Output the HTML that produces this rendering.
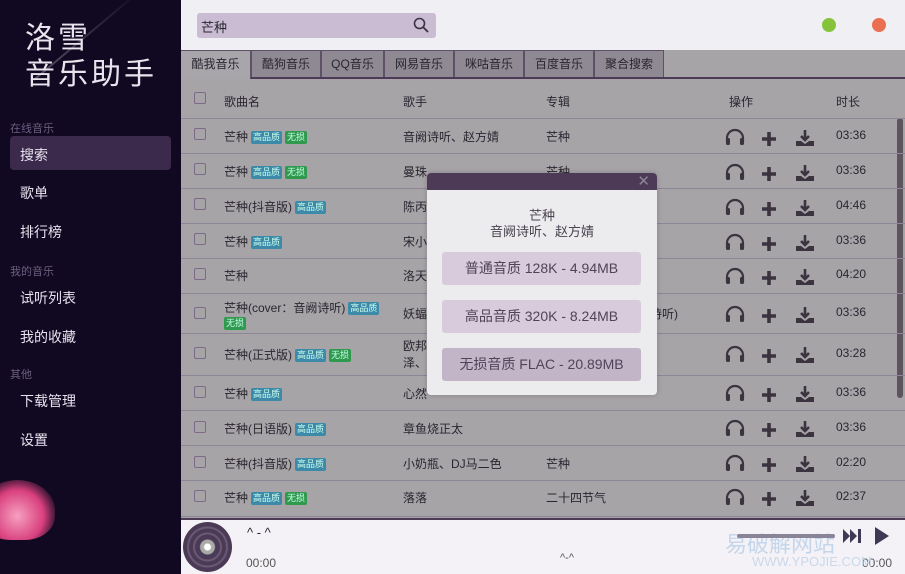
<!DOCTYPE html>
<html><head><meta charset="utf-8"><style>
*{margin:0;padding:0;box-sizing:border-box}
body{width:905px;height:574px;overflow:hidden;position:relative;font-family:"Liberation Sans","Noto Sans CJK SC",sans-serif;background:#a7a4a8}
.a{position:absolute;white-space:nowrap}
#side{left:0;top:0;width:181px;height:574px;background:#100921;overflow:hidden}
.logo{color:#e8e4ee;font-size:30px;letter-spacing:3px;line-height:38px}
.sec{color:#6e5e80;font-size:11px}
.nav{color:#e6e2ee;font-size:14px;left:20px}
#top{left:181px;top:0;width:724px;height:50px;background:#f0eff3}
.tab{top:50px;height:28px;font-size:12px;color:#2a2530;text-align:center;line-height:27px;background:#8f8994;border:1px solid #5e5066;border-bottom:none}
.line{left:181px;width:724px;height:1px;background:#8e8598}
.cb{width:12px;height:12px;border:1px solid #7d6a88;border-radius:2px;left:194px}
.t{font-size:12px;color:#2a2530}
.b{display:inline-block;font-size:9px;color:#cfe;padding:1px 2px;border-radius:2px;margin-left:3px;vertical-align:1px;line-height:11px}
.h{background:#3d8aa8}.w{background:#2f9a4e}
.btn{left:442px;width:199px;height:33px;border-radius:3px;background:#d8ccdc;font-size:14px;color:#514358;text-align:center;line-height:33px}
.tm{left:836px}
</style></head><body>
<div id="side" class="a">
<div class="a" style="width:2px;height:140px;background:linear-gradient(#100921,#8a8090);transform:rotate(50deg);transform-origin:top;left:140px;top:-10px;opacity:.6"></div>
<div class="a logo" style="left:25px;top:20px">洛雪</div>
<div class="a logo" style="left:25px;top:56px">音乐助手</div>
<div class="a sec" style="left:10px;top:120px">在线音乐</div>
<div class="a" style="left:10px;top:136px;width:161px;height:34px;background:#3b2a4c;border-radius:4px"></div>
<div class="a nav" style="top:145px">搜索</div>
<div class="a nav" style="top:183px">歌单</div>
<div class="a nav" style="top:222px">排行榜</div>
<div class="a sec" style="left:10px;top:263px">我的音乐</div>
<div class="a nav" style="top:288px">试听列表</div>
<div class="a nav" style="top:327px">我的收藏</div>
<div class="a sec" style="left:10px;top:366px">其他</div>
<div class="a nav" style="top:391px">下载管理</div>
<div class="a nav" style="top:430px">设置</div>
<div class="a" style="left:-20px;top:480px;width:75px;height:60px;border-radius:50% 50% 40% 40%;background:radial-gradient(circle at 50% 60%,#f6a0c0,#d9407e 50%,#100921 80%)"></div>
</div>
<div id="top" class="a">
<div class="a" style="left:16px;top:13px;width:239px;height:25px;background:#c9bcd3;border-radius:3px"></div>
<div class="a t" style="left:20px;top:17px;font-size:13px">芒种</div>
<svg class="a" style="left:232px;top:17px" width="16" height="16" viewBox="0 0 16 16"><circle cx="6.5" cy="6.5" r="5" fill="none" stroke="#3a3340" stroke-width="1.6"/><path d="M10 10l5 5" stroke="#3a3340" stroke-width="1.8"/></svg>
<div class="a" style="left:641px;top:18px;width:14px;height:14px;border-radius:50%;background:#85c43a"></div>
<div class="a" style="left:691px;top:18px;width:14px;height:14px;border-radius:50%;background:#ea6f50"></div>
</div>
<div class="a tab" style="left:181px;width:70px;background:#a9a6ab;height:29px;border-left:none">酷我音乐</div>
<div class="a tab" style="left:251px;width:70px">酷狗音乐</div>
<div class="a tab" style="left:321px;width:63px">QQ音乐</div>
<div class="a tab" style="left:384px;width:70px">网易音乐</div>
<div class="a tab" style="left:454px;width:70px">咪咕音乐</div>
<div class="a tab" style="left:524px;width:70px">百度音乐</div>
<div class="a tab" style="left:594px;width:70px">聚合搜索</div>
<div class="a" style="left:251px;top:77px;width:654px;height:2px;background:#4c3a56"></div>
<div class="a cb" style="top:92px"></div>
<div class="a t" style="left:224px;top:93px">歌曲名</div>
<div class="a t" style="left:403px;top:93px">歌手</div>
<div class="a t" style="left:546px;top:93px">专辑</div>
<div class="a t" style="left:729px;top:93px">操作</div>
<div class="a t" style="left:836px;top:93px">时长</div>
<div class="a" style="left:897px;top:118px;width:6px;height:280px;background:#5e5460;border-radius:3px"></div>

<div class="a line" style="top:118px"></div><div class="a line" style="top:153px"></div><div class="a line" style="top:188px"></div><div class="a line" style="top:223px"></div><div class="a line" style="top:258px"></div><div class="a line" style="top:293px"></div><div class="a line" style="top:333px"></div><div class="a line" style="top:375px"></div><div class="a line" style="top:410px"></div><div class="a line" style="top:445px"></div><div class="a line" style="top:480px"></div><div class="a line" style="top:516px"></div>

<div class="a cb" style="top:128px"></div><div class="a t" style="left:224px;top:128px">芒种<span class="b h">高品质</span><span class="b w">无损</span></div><div class="a t" style="left:403px;top:128px">音阙诗听、赵方婧</div><div class="a t" style="left:546px;top:128px">芒种</div><div class="a t tm" style="top:128px">03:36</div>
<div class="a cb" style="top:163px"></div><div class="a t" style="left:224px;top:163px">芒种<span class="b h">高品质</span><span class="b w">无损</span></div><div class="a t" style="left:403px;top:163px">曼珠</div><div class="a t" style="left:546px;top:163px">芒种</div><div class="a t tm" style="top:163px">03:36</div>
<div class="a cb" style="top:198px"></div><div class="a t" style="left:224px;top:198px">芒种(抖音版)<span class="b h">高品质</span></div><div class="a t" style="left:403px;top:198px">陈丙</div><div class="a t tm" style="top:198px">04:46</div>
<div class="a cb" style="top:233px"></div><div class="a t" style="left:224px;top:233px">芒种<span class="b h">高品质</span></div><div class="a t" style="left:403px;top:233px">宋小</div><div class="a t tm" style="top:233px">03:36</div>
<div class="a cb" style="top:268px"></div><div class="a t" style="left:224px;top:267px">芒种</div><div class="a t" style="left:403px;top:267px">洛天</div><div class="a t tm" style="top:267px">04:20</div>
<div class="a cb" style="top:307px"></div><div class="a t" style="left:224px;top:299px">芒种(cover：音阙诗听)<span class="b h">高品质</span></div><div class="a t" style="left:221px;top:316px"><span class="b w">无损</span></div><div class="a t" style="left:403px;top:305px">妖蝠</div><div class="a t" style="left:650px;top:305px">诗听)</div><div class="a t tm" style="top:305px">03:36</div>
<div class="a cb" style="top:347px"></div><div class="a t" style="left:224px;top:346px">芒种(正式版)<span class="b h">高品质</span><span class="b w">无损</span></div><div class="a t" style="left:403px;top:338px;line-height:17px">欧邦<br>泽、</div><div class="a t tm" style="top:346px">03:28</div>
<div class="a cb" style="top:386px"></div><div class="a t" style="left:224px;top:385px">芒种<span class="b h">高品质</span></div><div class="a t" style="left:403px;top:385px">心然</div><div class="a t tm" style="top:385px">03:36</div>
<div class="a cb" style="top:421px"></div><div class="a t" style="left:224px;top:420px">芒种(日语版)<span class="b h">高品质</span></div><div class="a t" style="left:403px;top:420px">章鱼烧正太</div><div class="a t tm" style="top:420px">03:36</div>
<div class="a cb" style="top:456px"></div><div class="a t" style="left:224px;top:455px">芒种(抖音版)<span class="b h">高品质</span></div><div class="a t" style="left:403px;top:455px">小奶瓶、DJ马二色</div><div class="a t" style="left:546px;top:455px">芒种</div><div class="a t tm" style="top:455px">02:20</div>
<div class="a cb" style="top:490px"></div><div class="a t" style="left:224px;top:489px">芒种<span class="b h">高品质</span><span class="b w">无损</span></div><div class="a t" style="left:403px;top:489px">落落</div><div class="a t" style="left:546px;top:489px">二十四节气</div><div class="a t tm" style="top:489px">02:37</div>

<svg class="a" style="left:724px;top:118px" width="100" height="400" viewBox="0 0 100 400">
<defs><g id="ops">
<path d="M3 17v-5a8 8 0 0 1 16 0v5" fill="none" stroke="#3b3340" stroke-width="2.2"/><rect x="2" y="12" width="4" height="7" rx="1.5" fill="#3b3340"/><rect x="16" y="12" width="4" height="7" rx="1.5" fill="#3b3340"/>
<path d="M45 6v14M38 13h14" stroke="#3b3340" stroke-width="3.6"/>
<path d="M81 4v9M77 10l4 4 4-4" stroke="#3b3340" stroke-width="2.6" fill="none"/><path d="M72 15h5l4 3 4-3h5v5H72z" fill="#3b3340"/>
</g></defs>
<use href="#ops" y="8"/><use href="#ops" y="43"/><use href="#ops" y="78"/><use href="#ops" y="113"/><use href="#ops" y="147"/><use href="#ops" y="185"/><use href="#ops" y="225"/><use href="#ops" y="264"/><use href="#ops" y="299"/><use href="#ops" y="334"/><use href="#ops" y="368"/>
</svg>

<div class="a" style="left:427px;top:173px;width:230px;height:222px;background:#ecebee;border-radius:4px;box-shadow:0 0 6px rgba(0,0,0,.2);overflow:hidden">
<div style="height:17px;background:#4c3a56"></div>
<div class="a" style="right:7px;top:-1px;color:#8f8398;font-size:15px">✕</div>
</div>
<div class="a" style="left:427px;top:205px;width:230px;text-align:center;font-size:13px;color:#4a4350">芒种</div>
<div class="a" style="left:427px;top:221px;width:230px;text-align:center;font-size:13px;color:#4a4350">音阙诗听、赵方婧</div>
<div class="a btn" style="top:252px">普通音质 128K - 4.94MB</div>
<div class="a btn" style="top:300px">高品音质 320K - 8.24MB</div>
<div class="a btn" style="top:348px;background:#c3b5c8">无损音质 FLAC - 20.89MB</div>

<div class="a" style="left:181px;top:518px;width:724px;height:2px;background:#4c3a56"></div>
<div class="a" style="left:181px;top:520px;width:724px;height:54px;background:#f4f2f6"></div>
<div class="a" style="left:183px;top:522px;width:49px;height:50px;border-radius:50%;background:radial-gradient(circle,#fff 0 3px,#aaa 4px 7px,#4a3a55 8px 12px,#6a5a75 13px 14px,#4a3a55 15px 18px,#6a5a75 19px 20px,#4a3a55 21px)"></div>
<div class="a t" style="left:247px;top:525px;font-size:13px">^ - ^</div>
<div class="a t" style="left:246px;top:556px;color:#555">00:00</div>
<div class="a t" style="left:560px;top:552px;color:#555;font-size:11px">^-^</div>
<div class="a t" style="left:862px;top:556px;color:#555">00:00</div>
<div class="a" style="left:725px;top:527px;color:#c4d6ec;font-size:22px">易破解网站</div>
<div class="a" style="left:752px;top:554px;color:#c9d8ea;font-size:13px">WWW.YPOJIE.COM</div>
<div class="a" style="left:737px;top:534px;width:98px;height:4px;background:#8a8499;border-radius:2px"></div>
<svg class="a" style="left:843px;top:527px" width="50" height="18"><path d="M0 2l7 7-7 7zM7 2l7 7-7 7z" fill="#3e3a55"/><rect x="15" y="2" width="3" height="14" fill="#3e3a55"/><path d="M32 0l14 9-14 9z" fill="#3e3a55"/></svg>
</body></html>
